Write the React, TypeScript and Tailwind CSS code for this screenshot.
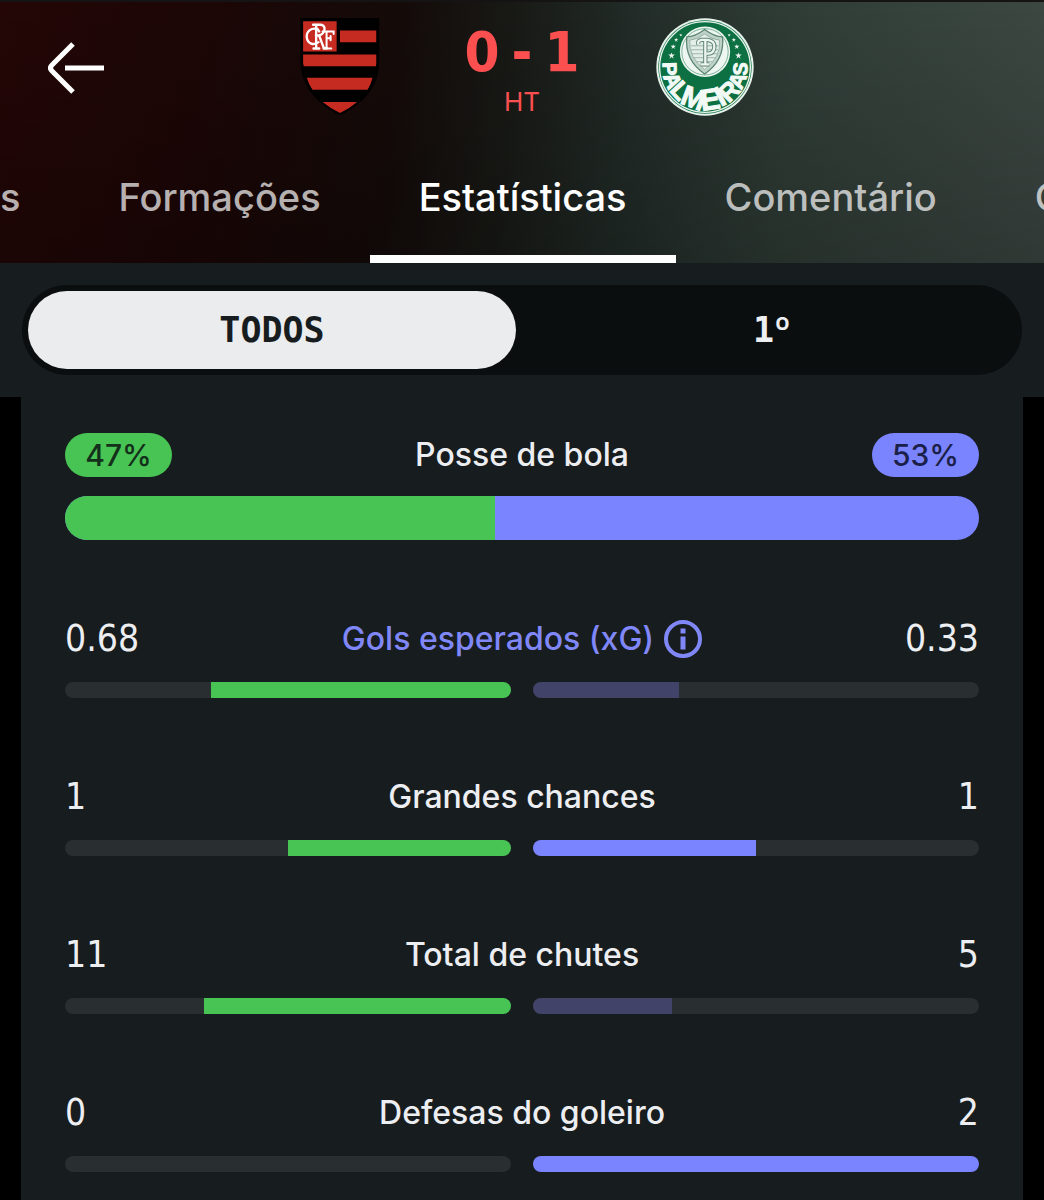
type Stat = {
  label: string;
  home: string;
  away: string;
  homeShare: number;
  awayShare: number;
  info?: boolean;
};

const stats: Stat[] = [
  { label: "Gols esperados (xG)", home: "0.68", away: "0.33", homeShare: 67.3, awayShare: 32.7, info: true },
  { label: "Grandes chances", home: "1", away: "1", homeShare: 50, awayShare: 50 },
  { label: "Total de chutes", home: "11", away: "5", homeShare: 68.75, awayShare: 31.25 },
  { label: "Defesas do goleiro", home: "0", away: "2", homeShare: 0, awayShare: 100 },
];

const digits = "font-['DejaVu_Sans_Condensed','DejaVu_Sans',sans-serif]";
const segment = "flex-1 rounded-full font-['DejaVu_Sans_Mono',monospace] text-[35px] font-bold";

function FlamengoCrest() {
  return (
    <svg viewBox="30 38 236 292" className="h-[98px] w-[98px]" role="img" aria-label="Flamengo">
      <path d="M30 38H265V170C263 245 215 295 148 328C82 295 32 245 30 170Z" fill="#000" />
      <g fill="#c52b20">
        <path d="M38 48H138V138H38Z" />
        <path d="M148 75H256V110H148Z" />
        <path d="M38 147H256V175L255 182H40L38 172Z" />
        <path d="M49 216H245Q240 236 230 252H66Q55 236 49 216Z" />
        <path d="M96 288H199Q176 308 148 321Q120 308 96 288Z" />
      </g>
      <g fill="none" stroke="#fff" strokeLinecap="round" strokeWidth="7">
        <path d="M82 72C64 64 47 78 49 96C51 115 70 121 84 110M80 70L86 78" />
        <path d="M68 58H90C108 59 105 84 86 90H76M77 61V129M69 129H86M86 91L100 128H109" />
        <path d="M96 78H129V86M108 80V128M108 98H120M120 92V104M99 129H122" strokeWidth="6" />
      </g>
    </svg>
  );
}

const crestLetters: [string, number][] = [
  ["P", 60],
  ["A", 66],
  ["L", 76],
  ["M", 86],
  ["E", 90],
  ["I", 86],
  ["R", 76],
  ["A", 66],
  ["S", 60],
];

function PalmeirasCrest() {
  const star = "M0 -8L2 -3L8 -3L3 1L5 7L0 3L-5 7L-3 1L-8 -3L-2 -3Z";
  return (
    <svg viewBox="32 38 296 296" className="size-[98px]" role="img" aria-label="Palmeiras">
      <circle cx="180" cy="186" r="147" fill="#e9f3ed" />
      <circle cx="180" cy="186" r="141" fill="#137447" />
      <circle cx="180" cy="186" r="137" fill="none" stroke="#e9f3ed" strokeWidth="4" />
      <circle cx="180" cy="186" r="133" fill="#0d7042" />
      <circle cx="180" cy="140" r="76" fill="#eef6f1" />
      <circle cx="180" cy="140" r="70" fill="none" stroke="#0d7042" strokeWidth="1.5" />
      <path d="M125 95Q150 95 179 73Q208 95 233 95Q240 165 179 207Q118 165 125 95Z" fill="#bfd2c8" stroke="#5d8672" strokeWidth="4" />
      <path d="M134 105Q158 103 179 86Q200 103 224 105Q228 157 179 194Q130 157 134 105Z" fill="#e3eee8" stroke="#7ea08f" strokeWidth="2" />
      <path d="M138 122H220M138 134H219M140 146H217M145 158H211M154 170H203M166 182H192" stroke="#9bb5a8" strokeWidth="3" />
      <path d="M160 117Q156 106 170 104H187Q211 107 208 128Q205 148 185 145M181 106V176M167 178H193" fill="none" stroke="#608674" strokeWidth="13" />
      <path d="M160 117Q156 106 170 104H187Q211 107 208 128Q205 148 185 145M181 106V176M168 178H192" fill="none" stroke="#f0f7f3" strokeWidth="7" />
      <g fill="#e9f3ed">
        <path d={star} transform="translate(79 152) scale(1.25)" />
        <path d={star} transform="translate(281 152) scale(1.25)" />
        <path d={star} transform="translate(84 125)" />
        <path d={star} transform="translate(276 125)" />
        <path d={star} transform="translate(93 104) scale(.8)" />
        <path d={star} transform="translate(267 104) scale(.8)" />
        <path d={star} transform="translate(107 90) scale(.6)" />
        <path d={star} transform="translate(253 90) scale(.6)" />
      </g>
      <path id="palmeiras-arc" d="M55 160A128 128 0 1 0 305 160" fill="none" />
      <text className="font-['Liberation_Sans',sans-serif] font-bold" fill="#f3faf6" stroke="#f3faf6" strokeWidth="3" textAnchor="middle">
        <textPath href="#palmeiras-arc" startOffset="50%">
          {crestLetters.map(([letter, size], i) => (
            <tspan key={i} fontSize={size}>{letter}</tspan>
          ))}
        </textPath>
      </text>
    </svg>
  );
}

function Tab({ label, active = false }: { label: string; active?: boolean }) {
  return (
    <button
      role="tab"
      aria-selected={active}
      className={
        active
          ? "h-full flex-none border-b-8 border-white px-[49px] pt-[6px] text-white"
          : "h-full flex-none border-b-8 border-transparent px-[49px] pt-[6px] text-white/70 first:pl-0"
      }
    >
      {label}
    </button>
  );
}

function InfoIcon() {
  return (
    <svg viewBox="0 0 38 38" className="size-[38px]" aria-hidden="true">
      <circle cx="19" cy="19" r="17" fill="none" stroke="currentColor" strokeWidth="4" />
      <path d="M16.500 8.500h5v5h-5zM16.500 16.500h5v13h-5z" fill="currentColor" />
    </svg>
  );
}

function StatRow({ stat }: { stat: Stat }) {
  return (
    <section className="mt-[77px]">
      <div className="flex h-11 items-center justify-between text-[#edeef1]">
        <span className={`${digits} flex-1 text-[37px]`}>{stat.home}</span>
        {stat.info ? (
          <button className="flex items-center gap-[10px] text-[32px] font-medium text-[#8087f7]">
            {stat.label}
            <InfoIcon />
          </button>
        ) : (
          <h2 className="text-[32px] font-medium">{stat.label}</h2>
        )}
        <span className={`${digits} flex-1 text-right text-[37px]`}>{stat.away}</span>
      </div>
      <div className="mt-[21px] flex h-4 gap-[22px]">
        <div className="flex flex-1 justify-end overflow-hidden rounded-full bg-[#292e30]">
          <div className="bg-[#47c453]" style={{ width: `${stat.homeShare}%` }} />
        </div>
        <div className="flex flex-1 overflow-hidden rounded-full bg-[#292e30]">
          <div
            className={stat.awayShare < stat.homeShare ? "bg-[#414368]" : "bg-[#7b84ff]"}
            style={{ width: `${stat.awayShare}%` }}
          />
        </div>
      </div>
    </section>
  );
}

export default function App() {
  return (
    <div className="min-h-screen overflow-hidden bg-black font-[Inter,sans-serif]">
      <header className="border-t-2 border-[#151313] bg-[linear-gradient(to_bottom,transparent,rgba(0,0,0,0.22)),linear-gradient(95deg,#240606_0%,#1c0606_20%,#140b09_38%,#181915_48%,#222c28_60%,#303d37_75%,#3d4843_100%)]">
        <div className="grid grid-cols-[1fr_auto_1fr] px-12">
          <button aria-label="Voltar" className="mt-[38px] size-14">
            <svg viewBox="0 0 56 54" className="h-[54px] w-14" fill="none" stroke="#fff" strokeWidth="5">
              <path d="M25 3L4 24Q1 27 4 30L25 51M17 27H56" />
            </svg>
          </button>
          <div className="flex h-[131px] items-start pt-4">
            <FlamengoCrest />
            <div className="flex w-[267px] flex-col items-center text-[#fc4f50]">
              <div className={`${digits} flex h-[68px] items-center justify-center gap-3 text-[56px] font-bold`}>
                <span>0</span>
                <span>-</span>
                <span>1</span>
              </div>
              <span className="text-[26px] leading-8">HT</span>
            </div>
            <PalmeirasCrest />
          </div>
        </div>
        <nav role="tablist" className="flex h-[130px] overflow-hidden text-[38px] font-medium">
          <Tab label="s" />
          <Tab label="Formações" />
          <Tab label="Estatísticas" active />
          <Tab label="Comentário" />
          <Tab label="C" />
        </nav>
      </header>

      <div className="bg-[#171c1f] p-[22px]">
        <div className="flex h-[90px] gap-3 rounded-full bg-[#0a0e0f] p-[6px]">
          <button className={`${segment} bg-[#ebecee] text-[#171c1f]`}>TODOS</button>
          <button className={`${segment} text-[#edeef1]`}>
            1<span className="font-[Inter]">º</span>
          </button>
        </div>
      </div>

      <main className="mx-[21px] bg-[#171c1e] px-11 pt-9 pb-[30px]">
        <section>
          <div className="flex h-11 items-center justify-between">
            <span className="flex h-full w-[107px] items-center justify-center rounded-full bg-[#47c453] text-[30px] font-medium text-[#14301b]">47%</span>
            <h2 className="text-[32px] font-medium text-[#edeef1]">Posse de bola</h2>
            <span className="flex h-full w-[107px] items-center justify-center rounded-full bg-[#7b84ff] text-[30px] font-medium text-[#1a2048]">53%</span>
          </div>
          <div className="mt-[19px] flex h-11 overflow-hidden rounded-full bg-[#7b84ff]">
            <div className="w-[47%] bg-[#47c453]" />
          </div>
        </section>
        {stats.map((stat) => (
          <StatRow key={stat.label} stat={stat} />
        ))}
      </main>
    </div>
  );
}
